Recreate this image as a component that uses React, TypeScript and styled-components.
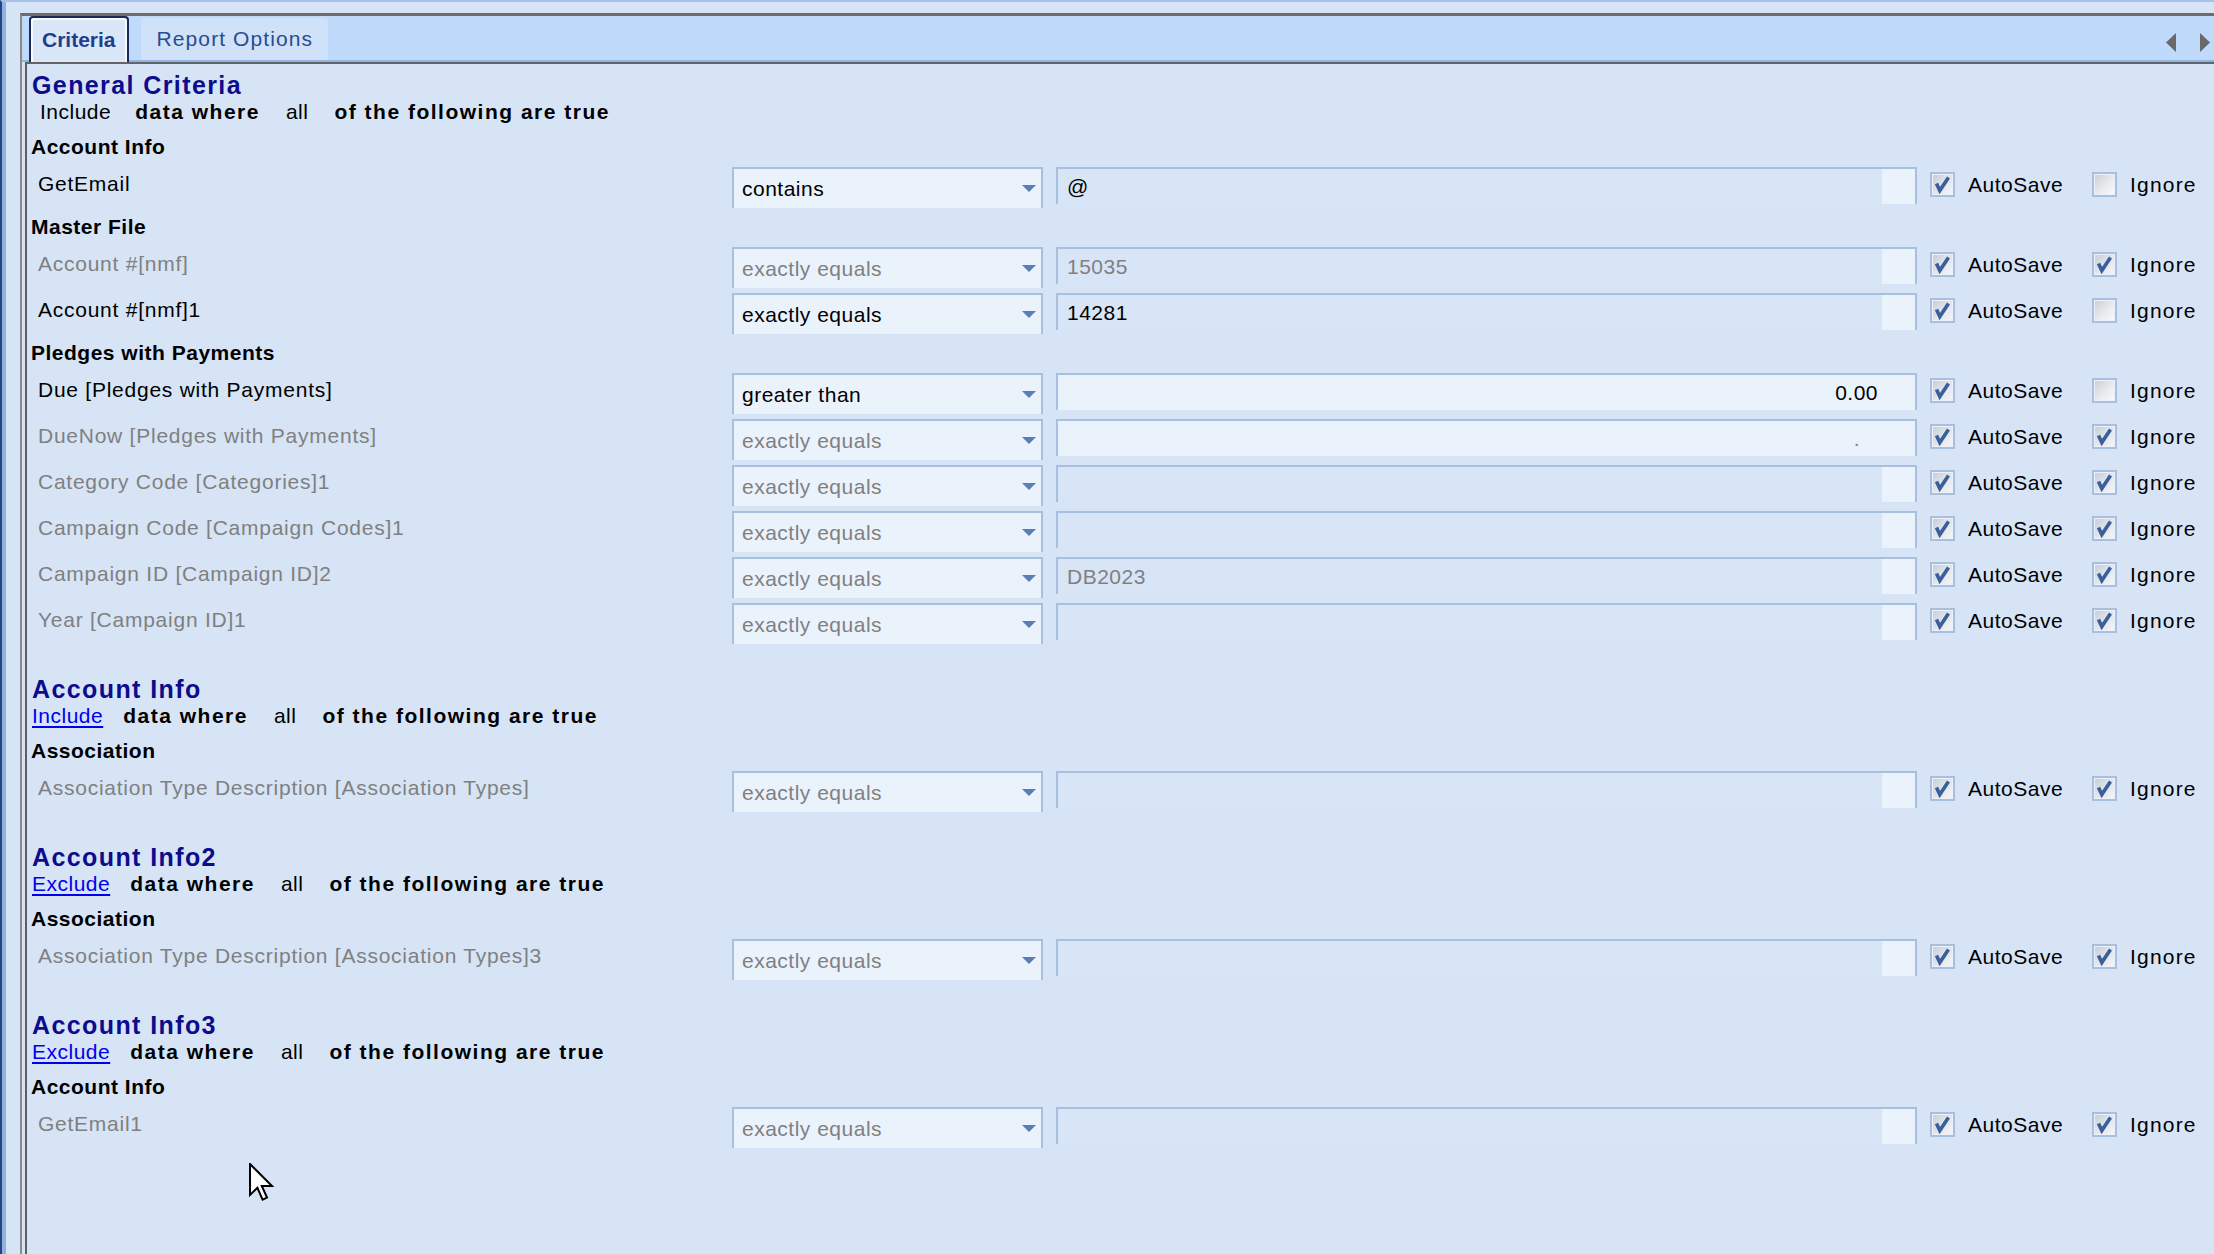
import React from 'react';
import styled, { createGlobalStyle } from 'styled-components';

const Global = createGlobalStyle`
  html, body { margin: 0; padding: 0; overflow: hidden; background: #d6e4f6; }
  body { font-family: "Liberation Sans", Arial, sans-serif; }
  * { box-sizing: border-box; }
`;

const Frame = styled.div`
  position: relative;
  height: 1254px;
  border-left: 2px solid #23467f;
  border-top: 2px solid #a7c2e8;
  padding: 11px 0 0 18px;
  background: linear-gradient(to right, #8fb2e0 0 4px, #d6e4f6 4px);
`;

const TabControl = styled.div`
  height: 100%;
  display: flex;
  flex-direction: column;
  border-left: 2px solid #8a8a8a;
  border-top: 3px solid #6c6c6c;
`;

const TabStrip = styled.div`
  height: 46px;
  flex: none;
  display: flex;
  align-items: flex-end;
  padding-left: 7px;
  background: #bfdafb;
  border-bottom: 2px solid #8fb4e8;
`;

const Tab = styled.div<{ $active?: boolean }>`
  position: relative;
  z-index: 1;
  display: flex;
  align-items: center;
  font-size: 21px;
  white-space: nowrap;
  color: #1f3f8e;
  ${p =>
    p.$active
      ? `
    height: 46px;
    margin-bottom: -2px;
    padding: 0 11px;
    font-weight: bold;
    background: #dae7f8;
    border: 2px solid #1b2b55;
    border-bottom: none;
    border-radius: 4px 4px 0 0;
    box-shadow: inset 2px 2px 0 #f6f9ff, inset -2px 0 0 #f6f9ff;
  `
      : `
    height: 42px;
    margin-left: 12px;
    padding: 0 15px 0 16px;
    letter-spacing: 1.1px;
    background: #cfe2f9;
    border-radius: 4px 4px 0 0;
    color: #2a4c8f;
  `}
`;

const Scrollers = styled.div`
  margin-left: auto;
  margin-right: 4px;
  padding-bottom: 8px;
  display: flex;
  gap: 24px;
  align-self: flex-end;
`;

const Content = styled.div`
  flex: 1;
  margin-left: 3px;
  border-left: 2px solid #5f5f5f;
  border-top: 2px solid #646464;
  background: #d6e4f6;
  padding-top: 6px;
`;

const Section = styled.section`
  & + & { margin-top: 28px; }
`;

const Heading = styled.div`
  height: 30px;
  line-height: 30px;
  padding-left: 5px;
  font-size: 25px;
  font-weight: bold;
  letter-spacing: 1.4px;
  color: #0c0c8c;
  white-space: nowrap;
`;

const Condition = styled.div`
  height: 24px;
  margin-bottom: 6px;
  display: flex;
  align-items: center;
  font-size: 21px;
  line-height: 24px;
  white-space: nowrap;
  color: #000;
`;

const Lead = styled.span<{ $link: boolean }>`
  margin-left: ${p => (p.$link ? 5 : 13)}px;
  margin-right: ${p => (p.$link ? 20 : 24)}px;
  letter-spacing: 0.5px;
  color: ${p => (p.$link ? '#0000ee' : '#000')};
  text-decoration: ${p => (p.$link ? 'underline' : 'none')};
  text-underline-offset: 3px;
`;

const Strong = styled.span`
  font-weight: bold;
  letter-spacing: 1.5px;
`;

const Plain = styled.span`
  margin: 0 26px 0 26px;
  letter-spacing: 0.5px;
`;

const GroupHeader = styled.div`
  height: 34px;
  line-height: 34px;
  padding-left: 4px;
  font-size: 21px;
  font-weight: bold;
  letter-spacing: 0.5px;
  color: #000;
  white-space: nowrap;
`;

const FieldRow = styled.div`
  height: 46px;
  padding-top: 3px;
  display: grid;
  grid-template-columns: 692px 311px 861px 149px 1fr;
  column-gap: 13px;
  align-items: start;
  font-size: 21px;
  letter-spacing: 0.5px;
`;

const FieldLabel = styled.div<{ $dim: boolean }>`
  padding-left: 11px;
  margin-top: 4px;
  line-height: 25px;
  letter-spacing: 0.75px;
  white-space: nowrap;
  color: ${p => (p.$dim ? '#808080' : '#000')};
`;

const Dropdown = styled.div<{ $dim: boolean }>`
  height: 41px;
  display: flex;
  align-items: center;
  justify-content: space-between;
  padding: 0 5px 0 8px;
  background: #eaf2fc;
  border: 2px solid #a8c0df;
  border-bottom: none;
  color: ${p => (p.$dim ? '#808080' : '#000')};
  white-space: nowrap;
`;

const ValueBox = styled.div<{ $light: boolean }>`
  height: 37px;
  display: flex;
  align-items: stretch;
  background: ${p => (p.$light ? '#eaf2fc' : '#d8e5f6')};
  border: 2px solid #a8c0df;
  border-bottom: none;
`;

const ValueText = styled.div<{ $dim: boolean; $right: boolean; $pad: number }>`
  flex: 1;
  display: flex;
  align-items: center;
  justify-content: ${p => (p.$right ? 'flex-end' : 'flex-start')};
  padding: 0 ${p => p.$pad}px 0 9px;
  color: ${p => (p.$dim ? '#808080' : '#000')};
  white-space: nowrap;
`;

const SpinArea = styled.div<{ $light: boolean }>`
  width: 33px;
  background: ${p => (p.$light ? 'transparent' : '#eaf2fc')};
`;

const CheckGroup = styled.label<{ $wide?: boolean }>`
  margin-top: 5px;
  display: flex;
  align-items: center;
  gap: 13px;
  line-height: 25px;
  letter-spacing: ${p => (p.$wide ? 1.2 : 0.5)}px;
  color: #000;
  white-space: nowrap;
`;

const Box = styled.span<{ $checked: boolean }>`
  width: 25px;
  height: 25px;
  flex: none;
  display: flex;
  align-items: center;
  justify-content: center;
  border: 2px solid #a7c0e1;
  box-shadow: inset 0 0 0 1px #eef2f7;
  background: ${p =>
    p.$checked
      ? 'linear-gradient(135deg, #c3ccd8 0%, #e3e8ee 55%, #f3f5f8 100%)'
      : 'linear-gradient(135deg, #c8ccd2 0%, #e6e8eb 50%, #fbfbfb 100%)'};
`;

const Pointer = styled.svg`
  position: absolute;
  left: 247px;
  top: 1161px;
`;

type Field = {
  label: string;
  op: string;
  value?: string;
  ignore: boolean;
  right?: boolean;
  light?: boolean;
  pad?: number;
};

type Group = { title: string; fields: Field[] };
type Sec = { title: string; lead: string; link: boolean; groups: Group[] };

const sections: Sec[] = [
  {
    title: 'General Criteria',
    lead: 'Include',
    link: false,
    groups: [
      { title: 'Account Info', fields: [{ label: 'GetEmail', op: 'contains', value: '@', ignore: false }] },
      {
        title: 'Master File',
        fields: [
          { label: 'Account #[nmf]', op: 'exactly equals', value: '15035', ignore: true },
          { label: 'Account #[nmf]1', op: 'exactly equals', value: '14281', ignore: false },
        ],
      },
      {
        title: 'Pledges with Payments',
        fields: [
          { label: 'Due [Pledges with Payments]', op: 'greater than', value: '0.00', ignore: false, right: true, light: true, pad: 37 },
          { label: 'DueNow [Pledges with Payments]', op: 'exactly equals', value: '.', ignore: true, right: true, light: true, pad: 55 },
          { label: 'Category Code [Categories]1', op: 'exactly equals', ignore: true },
          { label: 'Campaign Code [Campaign Codes]1', op: 'exactly equals', ignore: true },
          { label: 'Campaign ID [Campaign ID]2', op: 'exactly equals', value: 'DB2023', ignore: true },
          { label: 'Year [Campaign ID]1', op: 'exactly equals', ignore: true },
        ],
      },
    ],
  },
  {
    title: 'Account Info',
    lead: 'Include',
    link: true,
    groups: [
      { title: 'Association', fields: [{ label: 'Association Type Description [Association Types]', op: 'exactly equals', ignore: true }] },
    ],
  },
  {
    title: 'Account Info2',
    lead: 'Exclude',
    link: true,
    groups: [
      { title: 'Association', fields: [{ label: 'Association Type Description [Association Types]3', op: 'exactly equals', ignore: true }] },
    ],
  },
  {
    title: 'Account Info3',
    lead: 'Exclude',
    link: true,
    groups: [{ title: 'Account Info', fields: [{ label: 'GetEmail1', op: 'exactly equals', ignore: true }] }],
  },
];

const Check = ({ checked }: { checked: boolean }) => (
  <Box $checked={checked}>
    {checked && (
      <svg width="21" height="21" viewBox="0 0 21 21">
        <polyline points="4.5,9.5 7.8,16.5 16.5,3.5" fill="none" stroke="#3b5f9b" strokeWidth="3.6" strokeLinejoin="miter" />
      </svg>
    )}
  </Box>
);

const Arrow = () => (
  <svg width="14" height="7" viewBox="0 0 14 7">
    <polygon points="0,0 14,0 7,7" fill="#5a7fb5" />
  </svg>
);

const FieldLine = ({ f }: { f: Field }) => (
  <FieldRow>
    <FieldLabel $dim={f.ignore}>{f.label}</FieldLabel>
    <Dropdown $dim={f.ignore}>
      <span>{f.op}</span>
      <Arrow />
    </Dropdown>
    <ValueBox $light={!!f.light}>
      <ValueText $dim={f.ignore} $right={!!f.right} $pad={f.right ? (f.pad ?? 0) - 33 : 4}>
        {f.value ?? ''}
      </ValueText>
      <SpinArea $light={!!f.light} />
    </ValueBox>
    <CheckGroup>
      <Check checked />
      <span>AutoSave</span>
    </CheckGroup>
    <CheckGroup $wide>
      <Check checked={f.ignore} />
      <span>Ignore</span>
    </CheckGroup>
  </FieldRow>
);

export default function App() {
  return (
    <>
      <Global />
      <Frame>
        <TabControl>
          <TabStrip>
            <Tab $active>Criteria</Tab>
            <Tab>Report Options</Tab>
            <Scrollers>
              <svg width="10" height="19" viewBox="0 0 10 19">
                <polygon points="10,0 10,19 0,9.5" fill="#696969" />
              </svg>
              <svg width="10" height="19" viewBox="0 0 10 19">
                <polygon points="0,0 0,19 10,9.5" fill="#696969" />
              </svg>
            </Scrollers>
          </TabStrip>
          <Content>
            {sections.map(s => (
              <Section key={s.title}>
                <Heading>{s.title}</Heading>
                <Condition>
                  <Lead $link={s.link}>{s.lead}</Lead>
                  <Strong>data where</Strong>
                  <Plain>all</Plain>
                  <Strong>of the following are true</Strong>
                </Condition>
                {s.groups.map(g => (
                  <div key={g.title}>
                    <GroupHeader>{g.title}</GroupHeader>
                    {g.fields.map(f => (
                      <FieldLine key={f.label} f={f} />
                    ))}
                  </div>
                ))}
              </Section>
            ))}
          </Content>
        </TabControl>
        <Pointer width="26" height="38" viewBox="0 0 13 19">
          <path d="M0.5,0.5 L0.5,16 L4.2,12.4 L6.8,18.3 L9,17.3 L6.4,11.5 L11.5,11.5 Z" fill="#fff" stroke="#000" strokeWidth="1" strokeLinejoin="miter" />
        </Pointer>
      </Frame>
    </>
  );
}
